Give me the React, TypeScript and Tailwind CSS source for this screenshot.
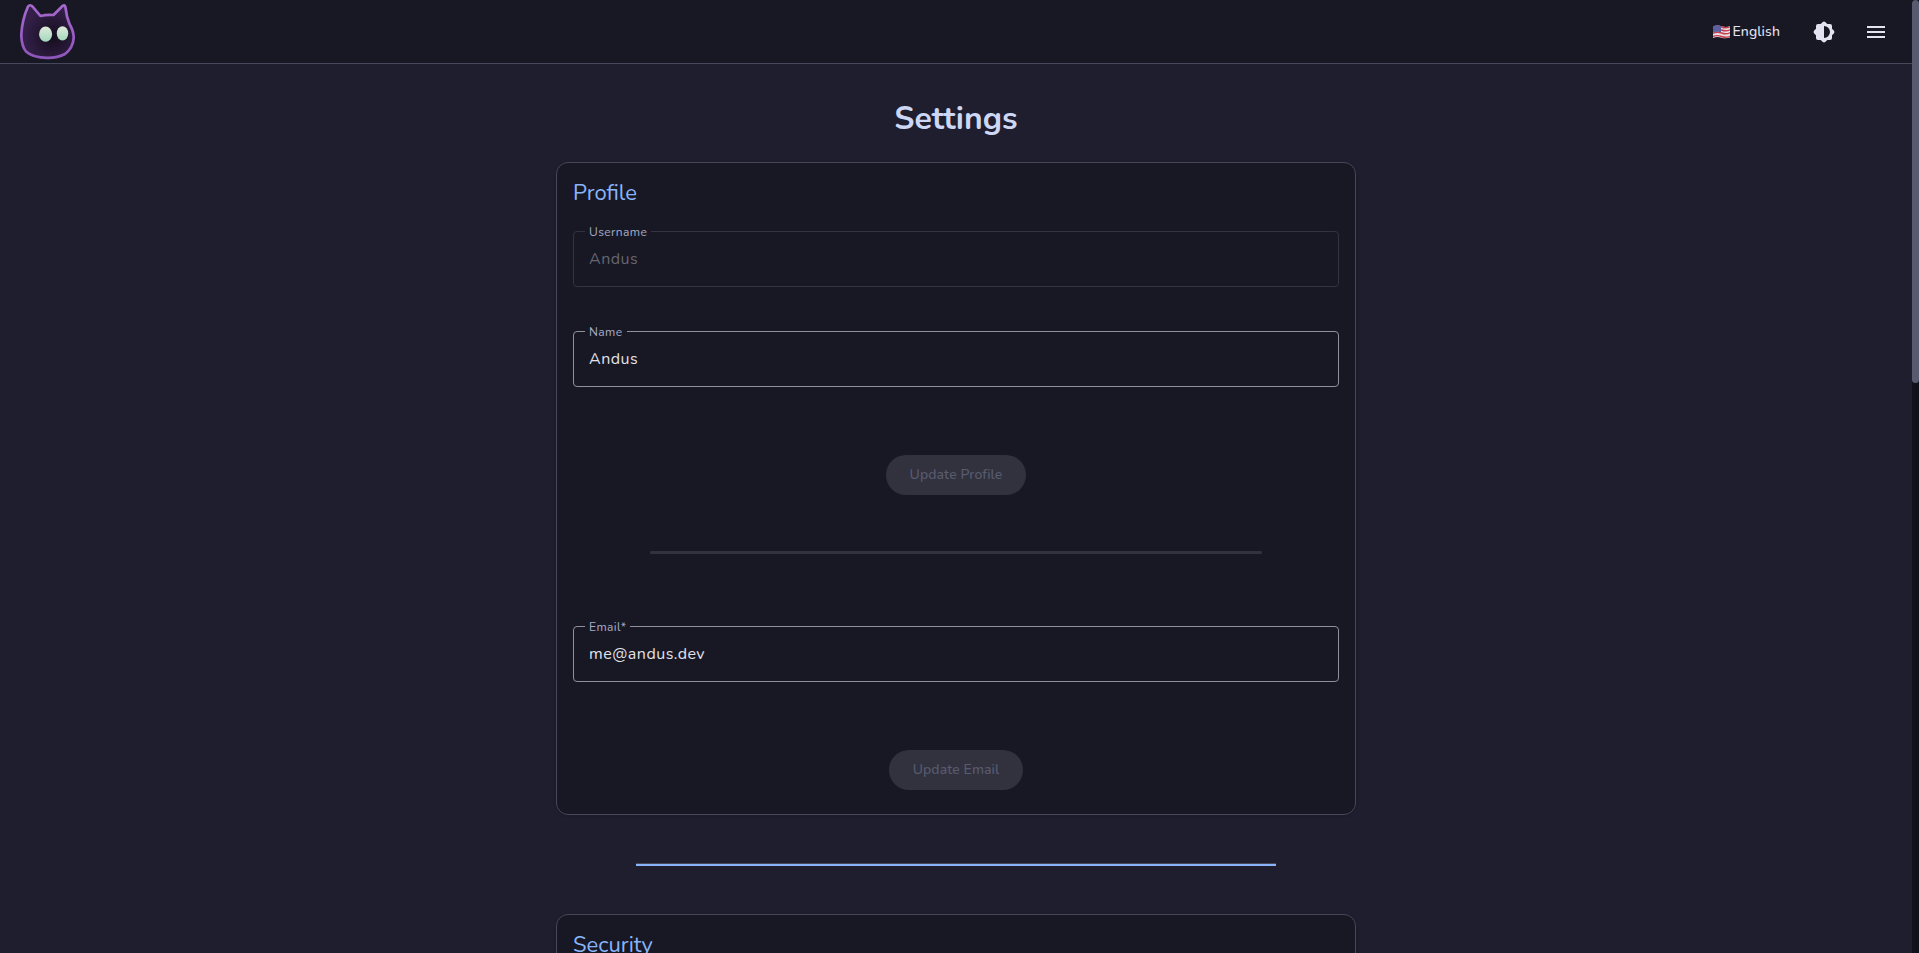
import { useState } from "react";
import { MdMenu } from "react-icons/md";

interface OutlinedFieldProps {
  id: string;
  label: string;
  value: string;
  type?: string;
  required?: boolean;
  disabled?: boolean;
  onChange?: (value: string) => void;
}

function OutlinedField({
  id,
  label,
  value,
  type = "text",
  required = false,
  disabled = false,
  onChange,
}: OutlinedFieldProps) {
  return (
    <div className="relative">
      <label
        htmlFor={id}
        className="absolute -top-[7px] left-3 bg-[#181825] px-1 text-[12px] leading-4 tracking-[0.4px] text-[#a6adc8]"
      >
        {label}
        {required && "*"}
      </label>
      <input
        id={id}
        type={type}
        value={value}
        required={required}
        disabled={disabled}
        onChange={(e) => onChange?.(e.target.value)}
        className="block h-14 w-full rounded border border-[#8f909a] bg-transparent px-[15px] text-[16px] tracking-[0.5px] text-[#e2e2e9] outline-none disabled:border-[#33333f] disabled:text-[#66666f]"
      />
    </div>
  );
}

function SubmitButton({ children }: { children: React.ReactNode }) {
  return (
    <button
      type="submit"
      disabled
      className="h-10 rounded-full bg-[#32323e] px-6 pb-0.5 text-[14px] font-medium tracking-[0.1px] text-[#585b70]"
    >
      {children}
    </button>
  );
}

function Card({ title, children }: { title: string; children?: React.ReactNode }) {
  return (
    <section className="rounded-xl border border-[#45475a] bg-[#181825] px-4 pt-4 pb-6 shadow-sm">
      <h2 className="text-[22px] leading-7 text-[#89b4fa]">{title}</h2>
      {children}
    </section>
  );
}

function Logo() {
  return (
    <svg width="56" height="58" viewBox="20 3 56 58" aria-hidden="true">
      <defs>
        <radialGradient id="fur" cx="0.6" cy="0.6" r="0.55">
          <stop offset="0" stopColor="#150e1e" />
          <stop offset="1" stopColor="#331f48" />
        </radialGradient>
        <linearGradient id="eye" x1="0" y1="0" x2="0" y2="1">
          <stop offset="0" stopColor="#dfeadb" />
          <stop offset="1" stopColor="#a2d8bc" />
        </linearGradient>
        <linearGradient id="edge" x1="0" y1="0" x2="0" y2="1">
          <stop offset="0" stopColor="#a568cc" />
          <stop offset="1" stopColor="#8f56bb" />
        </linearGradient>
      </defs>
      <path
        d="M28 6.500Q30 4 32.500 6.500L40.500 16Q47 14.300 53.500 15L62.500 6Q65 4 65.500 7.500Q66.500 17 69.500 24Q73.700 31 73.700 38Q73 48 65 54Q58 57.800 48 57.800Q33 58 26 51.500Q21.500 46 21.300 35Q22 20 28 6.500Z"
        fill="url(#fur)"
        stroke="url(#edge)"
        strokeWidth="2.7"
        strokeLinejoin="round"
      />
      <ellipse cx="45.600" cy="34.200" rx="6.500" ry="7.600" fill="url(#eye)" />
      <ellipse cx="62.500" cy="33.400" rx="5.700" ry="7.200" fill="url(#eye)" />
    </svg>
  );
}

function UsFlag() {
  return (
    <svg width="17" height="14" viewBox="0 0 17 14" aria-hidden="true">
      <path d="M0 1.5Q4 -0.5 8.500 1.200T17 1V12.500Q13 14 8.500 12.700T0 13Z" fill="#e8dfe3" />
      <path
        d="M0 2.300Q4 .3 8.500 2T17 1.800M0 5.300Q4 3.300 8.500 5T17 4.800M0 8.300Q4 6.300 8.500 8T17 7.800M0 11.500Q4 9.800 8.500 11.500T17 11.300"
        stroke="#c8404e"
        strokeWidth="1.4"
        fill="none"
      />
      <path d="M0 1.500Q4 -.5 8 1V7.200Q4 6 0 7.500Z" fill="#5c609e" />
    </svg>
  );
}

function ContrastIcon() {
  return (
    <svg width="24" height="24" viewBox="0 0 24 24" fill="currentColor" aria-hidden="true">
      <path
        fillRule="evenodd"
        d="M10.500 2.200Q12 .8 13.500 2.200L15.300 4H18Q20 4 20 6V8.700L21.800 10.500Q23.200 12 21.800 13.500L20 15.300V18Q20 20 18 20H15.300L13.500 21.800Q12 23.200 10.500 21.800L8.700 20H6Q4 20 4 18V15.300L2.200 13.500Q.8 12 2.200 10.500L4 8.700V6Q4 4 6 4H8.700ZM12 6V18A6 6 0 0 0 12 6Z"
      />
    </svg>
  );
}

export default function App() {
  const [name, setName] = useState("Andus");
  const [email, setEmail] = useState("me@andus.dev");

  return (
    <div className="flex h-screen overflow-hidden bg-[#1e1e2e] font-[Nunito,Lato,'Open_Sans',sans-serif]">
      <div className="min-w-0 flex-1">
        <header className="flex h-16 items-center justify-between border-b border-[#45475a] bg-[#181825] pr-6 pl-5 text-[#e2e2f0]">
          <a href="#home" aria-label="Home">
            <Logo />
          </a>
          <div className="flex items-center">
            <button
              type="button"
              className="mr-8 flex items-center gap-[3px] text-[14px] leading-5 font-medium tracking-[0.1px]"
            >
              <UsFlag />
              English
            </button>
            <button type="button" aria-label="Toggle theme" className="mr-7">
              <ContrastIcon />
            </button>
            <button type="button" aria-label="Menu">
              <MdMenu size={24} />
            </button>
          </div>
        </header>

        <main className="mx-auto max-w-[800px]">
          <h1 className="pt-[33px] pb-[21px] text-center text-[32px] leading-11 font-bold text-[#cdd6f4]">
            Settings
          </h1>

          <Card title="Profile">
            <form className="flex flex-col items-center pt-6">
              <div className="w-full">
                <OutlinedField id="username" label="Username" value="Andus" disabled />
              </div>
              <div className="mt-11 w-full">
                <OutlinedField id="name" label="Name" value={name} onChange={setName} />
              </div>
              <div className="mt-17">
                <SubmitButton>Update Profile</SubmitButton>
              </div>
            </form>

            <hr className="mx-auto mt-14 mb-18 h-[3px] w-4/5 rounded-sm border-0 bg-[#32323e]" />

            <form className="flex flex-col items-center">
              <div className="w-full">
                <OutlinedField
                  id="email"
                  label="Email"
                  type="email"
                  value={email}
                  required
                  onChange={setEmail}
                />
              </div>
              <div className="mt-17">
                <SubmitButton>Update Email</SubmitButton>
              </div>
            </form>
          </Card>

          <hr className="mx-auto my-12 h-[3px] w-4/5 border-t border-[#45475a] bg-[#89b4fa]" />

          <Card title="Security" />
        </main>
      </div>

      {/* scroll track */}
      <div className="w-[7px] bg-[#11111b]">
        <div className="h-[40.2%] rounded-full bg-[#585b70]" />
      </div>
    </div>
  );
}
